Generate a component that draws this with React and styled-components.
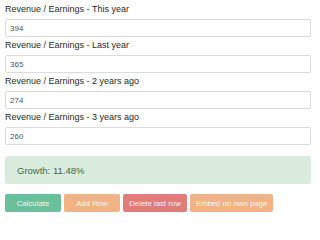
import React from 'react';
import styled, { createGlobalStyle } from 'styled-components';

const GlobalStyle = createGlobalStyle`
  body {
    margin: 0;
    background: #ffffff;
    font-family: "Liberation Sans", Arial, sans-serif;
  }
`;

const Page = styled.div`
  padding: 2px 9px 0 5px;
`;

const Field = styled.div`
  margin-bottom: 1px;
`;

const Label = styled.label`
  display: block;
  font-size: 9px;
  line-height: 15px;
  color: #2b2b2b;
`;

const Input = styled.input`
  display: block;
  box-sizing: border-box;
  width: 100%;
  height: 18px;
  margin-top: 2px;
  padding: 0 4px;
  border: 1px solid #dcdcdc;
  border-radius: 2px;
  font-family: inherit;
  font-size: 8px;
  color: #555555;
  background: #ffffff;
  outline: none;
`;

const Alert = styled.div`
  margin-top: 11px;
  height: 28px;
  box-sizing: border-box;
  padding: 0 12px;
  display: flex;
  align-items: center;
  background: #d9ecdd;
  border-radius: 3px;
  font-size: 9.5px;
  color: #3e6a4b;
`;

const Buttons = styled.div`
  display: flex;
  gap: 3px;
  margin-top: 10px;
`;

const Button = styled.button`
  flex: none;
  width: ${p => p.$w}px;
  height: 18px;
  padding: 0;
  border: none;
  border-radius: 2px;
  font-family: inherit;
  font-size: 7.8px;
  white-space: nowrap;
  color: rgba(255, 255, 255, 0.92);
  background: ${p => p.$bg};
  cursor: pointer;
`;

const rows = [
  { label: 'Revenue / Earnings - This year', value: '394' },
  { label: 'Revenue / Earnings - Last year', value: '365' },
  { label: 'Revenue / Earnings - 2 years ago', value: '274' },
  { label: 'Revenue / Earnings - 3 years ago', value: '260' },
];

export default function App() {
  return (
    <>
      <GlobalStyle />
      <Page>
        {rows.map(r => (
          <Field key={r.label}>
            <Label>{r.label}</Label>
            <Input type="text" defaultValue={r.value} />
          </Field>
        ))}
        <Alert>Growth: 11.48%</Alert>
        <Buttons>
          <Button $w={56} $bg="#6bbf9d">Calculate</Button>
          <Button $w={56} $bg="#f2b283">Add Row</Button>
          <Button $w={64} $bg="#e07d7b">Delete last row</Button>
          <Button $w={83} $bg="#f2b283">Embed on own page</Button>
        </Buttons>
      </Page>
    </>
  );
}
